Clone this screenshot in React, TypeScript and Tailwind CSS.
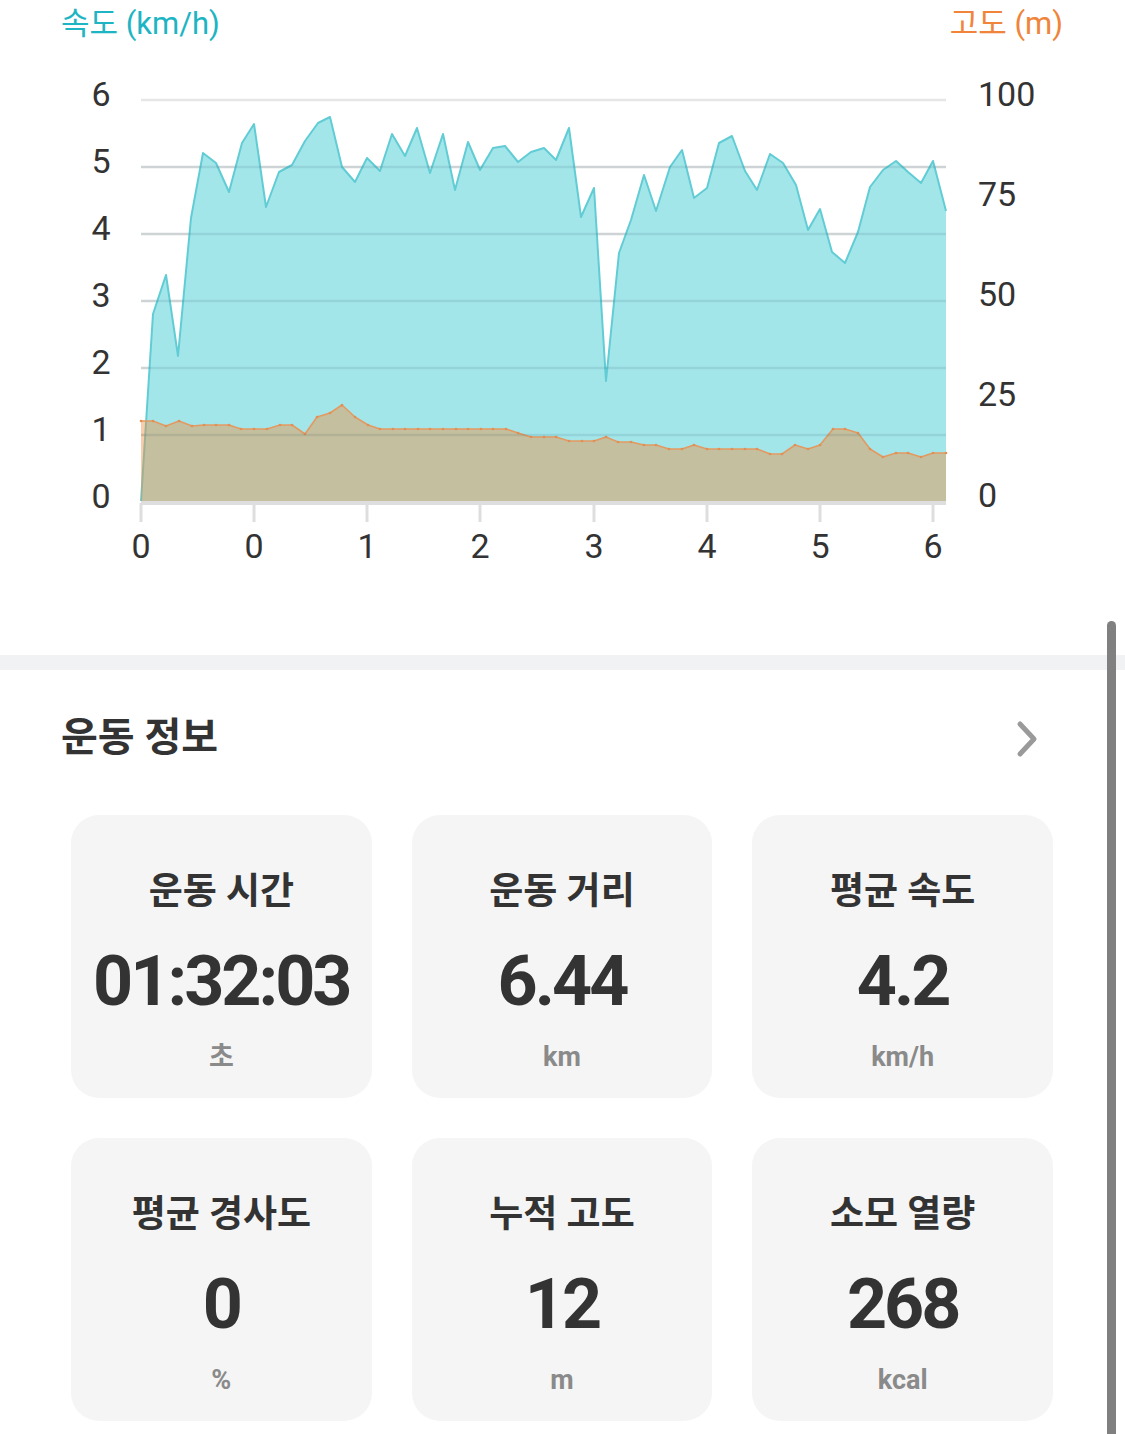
// Types
interface Stat {
  label: string;
  value: string;
  unit: string;
}

type Pt = [number, number];

// 속도 (page coords)
const speed: Pt[] = [
  [141, 501], [153, 314], [166, 275], [178, 356], [191, 218], [203, 153], [216, 163],
  [229, 192], [242, 143], [254, 124], [266, 207], [279, 172], [292, 165], [305, 141],
  [318, 123], [330, 117], [342, 167], [355, 182], [367, 158], [380, 171], [392, 134],
  [405, 156], [417, 128], [430, 173], [443, 134], [455, 190], [468, 142], [480, 170],
  [493, 148], [505, 146], [518, 162], [531, 152], [544, 148], [556, 160], [569, 128],
  [581, 217], [594, 188], [606, 381], [619, 253], [631, 220], [644, 175], [656, 211],
  [670, 167], [682, 150], [694, 198], [707, 188], [719, 143], [732, 136], [745, 171],
  [757, 190], [770, 154], [783, 163], [796, 185], [808, 230], [820, 209], [832, 252],
  [845, 263], [858, 232], [870, 187], [883, 170], [896, 161], [908, 172], [921, 183],
  [933, 161], [946, 211],
];

// 고도
const elevation: Pt[] = [
  [141, 421], [153, 421], [166, 426], [179, 421], [192, 426], [204, 425], [216, 425],
  [229, 425], [241, 429], [254, 429], [267, 429], [280, 425], [292, 425], [305, 434],
  [317, 417], [330, 413], [342, 405], [355, 417], [368, 425], [380, 429], [393, 429],
  [405, 429], [418, 429], [430, 429], [443, 429], [456, 429], [468, 429], [481, 429],
  [493, 429], [506, 429], [518, 433], [531, 437], [544, 437], [556, 437], [569, 441],
  [582, 441], [594, 441], [606, 437], [618, 442], [631, 442], [644, 445], [656, 445],
  [669, 449], [682, 449], [694, 445], [707, 449], [719, 449], [732, 449], [745, 449],
  [757, 449], [770, 454], [782, 454], [795, 445], [808, 449], [820, 445], [833, 429],
  [845, 429], [858, 433], [870, 449], [883, 457], [896, 453], [908, 453], [921, 457],
  [933, 453], [946, 453],
];

const leftTicks = [6, 5, 4, 3, 2, 1, 0];
const rightTicks = [
  { label: '100', y: 95 },
  { label: '75', y: 195 },
  { label: '50', y: 295 },
  { label: '25', y: 395 },
  { label: '0', y: 496 },
];
const xTicks = [
  { x: 141, label: '0' },
  { x: 254, label: '0' },
  { x: 367, label: '1' },
  { x: 480, label: '2' },
  { x: 594, label: '3' },
  { x: 707, label: '4' },
  { x: 820, label: '5' },
  { x: 933, label: '6' },
];

const stats: Stat[] = [
  { label: '운동 시간', value: '01:32:03', unit: '초' },
  { label: '운동 거리', value: '6.44', unit: 'km' },
  { label: '평균 속도', value: '4.2', unit: 'km/h' },
  { label: '평균 경사도', value: '0', unit: '%' },
  { label: '누적 고도', value: '12', unit: 'm' },
  { label: '소모 열량', value: '268', unit: 'kcal' },
];

const line = (pts: Pt[]) => pts.map(([x, y], i) => `${i ? 'L' : 'M'}${x} ${y}`).join(' ');
const area = (pts: Pt[]) => `${line(pts)} L946 501 L141 501 Z`;

function Chart() {
  return (
    <svg width={1125} height={607} viewBox="0 48 1125 607" className="block">
      <g fontFamily="Roboto, sans-serif" fontSize={34} fill="#333">
        {leftTicks.map((v, i) => (
          <text key={v} x={101} y={100 + i * 67 - 3} textAnchor="middle" dominantBaseline="middle">
            {v}
          </text>
        ))}
        {rightTicks.map((t) => (
          <text key={t.label} x={978} y={t.y + 2} dominantBaseline="middle">
            {t.label}
          </text>
        ))}
        {xTicks.map((t, i) => (
          <text key={i} x={t.x} y={549} textAnchor="middle" dominantBaseline="middle">
            {t.label}
          </text>
        ))}
      </g>

      {/* 그리드 (배경) */}
      {leftTicks.slice(0, 6).map((v, i) => (
        <line key={v} x1={141} x2={946} y1={100 + i * 67} y2={100 + i * 67} stroke="#e6e6e6" strokeWidth={2.5} />
      ))}

      {/* 속도 */}
      <path d={area(speed)} fill="#a3e6ea" />
      <path d={line(speed)} fill="none" stroke="#62ccd5" strokeWidth={2} strokeLinejoin="round" />

      {/* 고도 */}
      <path d={area(elevation)} fill="rgba(240,140,60,0.43)" />
      <path d={line(elevation)} fill="none" stroke="#e39a62" strokeWidth={1.6} strokeLinejoin="round" />
      {elevation.map(([x, y], i) => (
        <circle key={i} cx={x} cy={y} r={1.3} fill="#e08f55" />
      ))}

      {/* 그리드 (위) */}
      {leftTicks.slice(1, 6).map((v, i) => (
        <line key={v} x1={141} x2={946} y1={167 + i * 67} y2={167 + i * 67} stroke="rgba(0,60,70,0.1)" strokeWidth={2.5} />
      ))}

      {/* x축 */}
      <line x1={141} x2={946} y1={503} y2={503} stroke="#dedede" strokeWidth={4} />
      {xTicks.map((t, i) => (
        <line key={i} x1={t.x} x2={t.x} y1={503} y2={522} stroke="#dedede" strokeWidth={3} />
      ))}
    </svg>
  );
}

export default function App() {
  return (
    <div className="relative w-[1125px] h-[1434px] overflow-hidden bg-white font-[Roboto,'Noto_Sans_CJK_KR',sans-serif] text-[#333]">
      {/* Chart header */}
      <div className="flex justify-between items-center h-[48px] pl-[61px] pr-[62px] text-[31px]">
        <span className="text-[#1db4c3]">속도 (km/h)</span>
        <span className="text-[#f0843a]">고도 (m)</span>
      </div>

      <Chart />

      <div className="h-[15px] bg-[#f1f2f4]" />

      {/* 운동 정보 */}
      <div className="flex items-center justify-between h-[136px] pl-[61px] pr-[86px]">
        <h2 className="text-[40px] font-bold leading-none">운동 정보</h2>
        <svg width={24} height={40} viewBox="0 0 24 40" className="mt-[2px]">
          <path d="M5 5 L19 20 L5 35" fill="none" stroke="#9a9a9a" strokeWidth={5} strokeLinecap="round" strokeLinejoin="round" />
        </svg>
      </div>

      <div className="grid grid-cols-3 gap-[40px] mt-[9px] pl-[71px] pr-[72px]">
        {stats.map((s) => (
          <div
            key={s.label}
            className="flex flex-col items-center h-[283px] pt-[59px] rounded-[28px] bg-[#f5f5f5]"
          >
            <div className="text-[37px] leading-[36px] font-bold text-[#333]">{s.label}</div>
            <div className="mt-[36px] text-[70px] leading-[70px] font-bold tracking-[-3px] text-[#333]">
              {s.value}
            </div>
            <div className="mt-[26px] text-[27px] leading-[30px] font-bold text-[#8a8a8a]">{s.unit}</div>
          </div>
        ))}
      </div>

      {/* Scrollbar */}
      <div className="absolute left-[1107px] top-[621px] w-[9px] h-[840px] rounded-full bg-[#808080]" />
    </div>
  );
}
